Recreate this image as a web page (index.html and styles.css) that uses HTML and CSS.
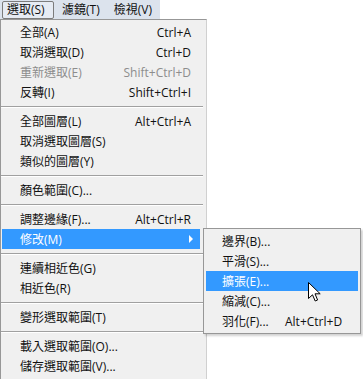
FILE: index.html
```html
<!DOCTYPE html>
<html lang="zh-Hant">
<head>
  <meta charset="UTF-8">
  <meta name="viewport" content="width=device-width, initial-scale=1.0">
  <title>選取</title>
  <link rel="stylesheet" href="styles.css">
</head>
<body>
  <!-- Menu bar -->
  <nav class="menubar">
    <span class="bar-item open">選取(S)</span>
    <span class="bar-item">濾鏡(T)</span>
    <span class="bar-item">檢視(V)</span>
  </nav>

  <!-- Select menu -->
  <div class="menu">
    <div class="item"><span>全部(A)</span><span class="key">Ctrl+A</span></div>
    <div class="item"><span>取消選取(D)</span><span class="key">Ctrl+D</span></div>
    <div class="item disabled"><span>重新選取(E)</span><span class="key">Shift+Ctrl+D</span></div>
    <div class="item"><span>反轉(I)</span><span class="key">Shift+Ctrl+I</span></div>
    <div class="sep"></div>
    <div class="item"><span>全部圖層(L)</span><span class="key">Alt+Ctrl+A</span></div>
    <div class="item"><span>取消選取圖層(S)</span></div>
    <div class="item"><span>類似的圖層(Y)</span></div>
    <div class="sep"></div>
    <div class="item"><span>顏色範圍(C)...</span></div>
    <div class="sep"></div>
    <div class="item"><span>調整邊緣(F)...</span><span class="key">Alt+Ctrl+R</span></div>
    <div class="item active"><span>修改(M)</span><span class="arrow"></span></div>
    <div class="sep"></div>
    <div class="item"><span>連續相近色(G)</span></div>
    <div class="item"><span>相近色(R)</span></div>
    <div class="sep"></div>
    <div class="item"><span>變形選取範圍(T)</span></div>
    <div class="sep"></div>
    <div class="item"><span>載入選取範圍(O)...</span></div>
    <div class="item"><span>儲存選取範圍(V)...</span></div>

    <!-- Modify submenu -->
    <div class="submenu">
      <div class="sub-item"><span class="label">邊界(B)...</span></div>
      <div class="sub-item"><span class="label">平滑(S)...</span></div>
      <div class="sub-item active"><span class="label">擴張(E)...</span></div>
      <div class="sub-item"><span class="label">縮減(C)...</span></div>
      <div class="sub-item"><span class="label">羽化(F)...</span><span>Alt+Ctrl+D</span></div>
    </div>

    <svg class="cursor" width="14" height="21" viewBox="0 0 14 21">
      <path d="M0.5 0.5 L0.5 16.5 L4.5 12.8 L7.2 19 L9.6 18 L7 11.8 L12.2 11.8 Z" fill="#fff" stroke="#000" stroke-width="1" stroke-linejoin="miter"/>
    </svg>
  </div>
</body>
</html>
```

FILE: styles.css
```css
/* Reset */
* {
  margin: 0;
  padding: 0;
  box-sizing: border-box;
}

body {
  font-family: "Open Sans", "Noto Sans CJK TC", sans-serif;
  font-size: 12px;
  color: #111;
  background-color: #fff;
  width: 363px;
  height: 379px;
  overflow: hidden;
}

/* Menu bar */
.menubar {
  display: flex;
  align-items: center;
  width: 160px;
  height: 19px;
  padding-left: 2px;
  gap: 3px;
  background-color: #dce3ed;
}

.bar-item {
  height: 18px;
  line-height: 16px;
  padding: 0 5px 0 4px;
  border: 1px solid transparent;
}

.bar-item.open {
  width: 52px;
  border-color: #7c7c7c;
  border-radius: 2px;
  background-color: #e6ebf3;
}

/* Main menu */
.menu {
  position: relative;
  width: 207px;
  height: 360px;
  padding-top: 2px;
  background-color: #f0f0f0;
  border-top: 1px solid #979797;
  border-left: 1px solid #979797;
  border-right: 1px solid #d0d0d0;
}

.item {
  display: flex;
  justify-content: space-between;
  align-items: center;
  height: 20px;
  margin: 0 6px 0 1px;
  padding: 0 9px 0 18px;
  white-space: nowrap;
}

.item.disabled {
  color: #8d8d8d;
}

.item.active {
  background-color: #3399ff;
  color: #fff;
}

.arrow {
  width: 0;
  height: 0;
  margin-right: -2px;
  border-top: 4px solid transparent;
  border-bottom: 4px solid transparent;
  border-left: 4px solid #fff;
}

.sep {
  height: 1px;
  margin: 4px 3px 4px 0;
  background-color: #a0a0a0;
  box-shadow: 0 1px 0 #fff;
}

/* Submenu */
.submenu {
  position: absolute;
  top: 208px;
  left: 202px;
  width: 158px;
  padding: 2px 0;
  background-color: #f0f0f0;
  border: 1px solid #979797;
  box-shadow: 2px 2px 2px rgba(0, 0, 0, 0.18);
}

.sub-item {
  display: flex;
  align-items: center;
  height: 20px;
  margin: 0 2px;
  padding-left: 16px;
  white-space: nowrap;
}

.sub-item .label {
  width: 63px;
}

.sub-item.active {
  background-color: #3399ff;
  color: #fff;
}

/* Mouse pointer */
.cursor {
  position: absolute;
  top: 262px;
  left: 307px;
}
```
